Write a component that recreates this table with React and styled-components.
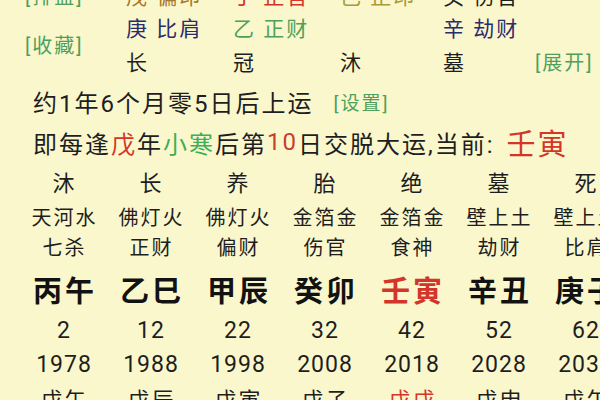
import React from "react";
import styled, { createGlobalStyle } from "styled-components";

const Global = createGlobalStyle`
  html, body { margin: 0; padding: 0; }
  body {
    width: 600px;
    height: 400px;
    overflow: hidden;
    background: #faf7cd;
    font-family: "Roboto", "Noto Sans CJK SC", sans-serif;
    color: #1e1e1e;
  }
`;

const C = {
  green: "#4f9f5c",
  navy: "#2a2c6c",
  red: "#d3352a",
  brown: "#a8782c",
  olive: "#a99a3c",
  dark: "#1e1e1e",
};

const Page = styled.div`
  width: 600px;
  height: 400px;
  overflow: hidden;
`;

const Pillars = styled.div`
  display: grid;
  grid-template-columns: 126px 107px 107px 103px 92px 1fr;
  grid-template-rows: 30px 34px 34px;
  margin-top: -20px;
  font-size: 21px;
  letter-spacing: 2px;
`;

const Cell = styled.div`
  display: flex;
  align-items: center;
  white-space: nowrap;
  color: ${(p) => p.$color || C.dark};
  grid-column: ${(p) => p.$col || "auto"};
  grid-row: ${(p) => p.$row || "auto"};
`;

const Link = styled(Cell)`
  color: ${C.green};
  font-size: 20px;
  letter-spacing: 2px;
  padding-left: ${(p) => p.$pl || 0}px;
`;

const Line = styled.div`
  height: ${(p) => p.$h}px;
  display: flex;
  align-items: center;
  padding-left: 33px;
  font-size: 24px;
  letter-spacing: 2px;
  white-space: nowrap;
  color: ${C.dark};
`;

const Tag = styled.span`
  color: ${(p) => p.$color};
  font-size: ${(p) => p.$size || 24}px;
  margin-left: ${(p) => p.$ml || 0}px;
`;

const Setting = styled.span`
  color: ${C.green};
  font-size: 19px;
  letter-spacing: 2px;
  margin-left: 20px;
`;

const Row = styled.div`
  display: grid;
  grid-template-columns: repeat(7, 87px);
  padding-left: 20px;
  margin-top: ${(p) => p.$mt}px;
  height: ${(p) => p.$h}px;
  font-size: ${(p) => p.$size}px;
  font-weight: ${(p) => p.$weight || 400};
  letter-spacing: ${(p) => p.$ls}px;
`;

const Item = styled.div`
  display: flex;
  align-items: center;
  justify-content: center;
  white-space: nowrap;
  padding-left: ${(p) => p.$ls}px;
  color: ${(p) => (p.$hot ? C.red : p.$strong ? "#121212" : C.dark)};
`;

const luck = ["沐", "长", "养", "胎", "绝", "墓", "死"];
const nayin = ["天河水", "佛灯火", "佛灯火", "金箔金", "金箔金", "壁上土", "壁上土"];
const gods = ["七杀", "正财", "偏财", "伤官", "食神", "劫财", "比肩"];
const pillars = ["丙午", "乙巳", "甲辰", "癸卯", "壬寅", "辛丑", "庚子"];
const ages = ["2", "12", "22", "32", "42", "52", "62"];
const years = ["1978", "1988", "1998", "2008", "2018", "2028", "2038"];
const flows = ["戊午", "戊辰", "戊寅", "戊子", "戊戌", "戊申", "戊午"];

const HOT = 4;

function DataRow({ items, mt, h, size, ls, weight, strong, hot }) {
  return (
    <Row $mt={mt} $h={h} $size={size} $ls={ls} $weight={weight}>
      {items.map((t, i) => (
        <Item key={i} $ls={ls} $hot={hot && i === HOT} $strong={strong}>
          {t}
        </Item>
      ))}
    </Row>
  );
}

export default function App() {
  return (
    <Page>
      <Global />
      <Pillars>
        <Link $pl={25} $row="1" $col="1">[排盘]</Link>
        <Cell $row="1" $col="2" $color={C.brown}>戊 偏印</Cell>
        <Cell $row="1" $col="3" $color={C.red}>丁 正官</Cell>
        <Cell $row="1" $col="4" $color={C.olive}>己 正印</Cell>
        <Cell $row="1" $col="5" $color={C.dark}>癸 伤官</Cell>

        <Link $pl={25} $row="2 / span 2" $col="1">[收藏]</Link>
        <Cell $row="2" $col="2" $color={C.navy}>庚 比肩</Cell>
        <Cell $row="2" $col="3" $color={C.green}>乙 正财</Cell>
        <Cell $row="2" $col="5" $color={C.navy}>辛 劫财</Cell>

        <Cell $row="3" $col="2">长</Cell>
        <Cell $row="3" $col="3">冠</Cell>
        <Cell $row="3" $col="4">沐</Cell>
        <Cell $row="3" $col="5">墓</Cell>
        <Link $row="3" $col="6">[展开]</Link>
      </Pillars>

      <Line $h={46}>
        约1年6个月零5日后上运
        <Setting>[设置]</Setting>
      </Line>
      <Line $h={36}>
        即每逢<Tag $color={C.red}>戊</Tag>年<Tag $color="#3fae55">小寒</Tag>后第
        <Tag $color="#c8402c">10</Tag>日交脱大运,当前:&nbsp;
        <Tag $color={C.red} $size={29} $ml={4}>壬寅</Tag>
      </Line>

      <DataRow items={luck} mt={5} h={30} size={22} ls={1} />
      <DataRow items={nayin} mt={6} h={30} size={20} ls={2} />
      <DataRow items={gods} mt={0} h={30} size={20} ls={2} />
      <DataRow items={pillars} mt={7} h={40} size={29} ls={3} weight={700} strong hot />
      <DataRow items={ages} mt={7} h={30} size={23} ls={1} />
      <DataRow items={years} mt={4} h={30} size={23} ls={1} />
      <DataRow items={flows} mt={3} h={30} size={22} ls={2} hot />
    </Page>
  );
}
